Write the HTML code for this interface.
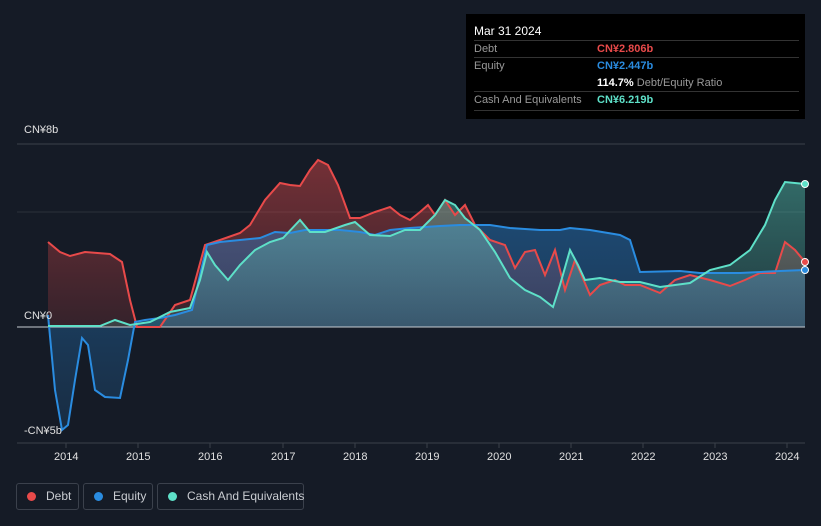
<!DOCTYPE html>
<html><head><meta charset="utf-8"><style>
html,body{margin:0;width:821px;height:526px;overflow:hidden}
body{background:#151b26;font-family:"Liberation Sans",sans-serif;position:relative}
.tt{position:absolute;left:466px;top:14px;width:339px;height:105px;background:#000;color:#fff;font-size:11px}
.tt .r{position:absolute;left:8px;right:6px;border-top:1px solid #333}
.lg{position:absolute;top:483px;height:27px;border:1px solid #3b414c;border-radius:3px;color:#c9ccd1;font-size:12px;line-height:25px;box-sizing:border-box;white-space:nowrap}
.lg i{display:inline-block;width:9px;height:9px;border-radius:50%;margin:0 10px 0 10px;vertical-align:-1px}
.ax{position:absolute;color:#e0e0e0;font-size:11px}
</style></head><body>
<svg width="821" height="526" style="position:absolute;left:0;top:0">
<defs>
<linearGradient id="gd" x1="0" y1="0" x2="0" y2="1"><stop offset="0" stop-color="#e84a4a" stop-opacity=".45"/><stop offset="1" stop-color="#e84a4a" stop-opacity=".15"/></linearGradient>
<linearGradient id="ge" x1="0" y1="0" x2="0" y2="1"><stop offset="0" stop-color="#2a8ce0" stop-opacity=".4"/><stop offset="1" stop-color="#2a8ce0" stop-opacity=".15"/></linearGradient>
<linearGradient id="gc" x1="0" y1="0" x2="0" y2="1"><stop offset="0" stop-color="#5ee0c8" stop-opacity=".4"/><stop offset="1" stop-color="#5ee0c8" stop-opacity=".15"/></linearGradient>
</defs>
<line x1="17" y1="144" x2="805" y2="144" stroke="#3a404a"/>
<line x1="17" y1="212" x2="805" y2="212" stroke="#2a303a"/>
<line x1="17" y1="443" x2="805" y2="443" stroke="#3a404a"/>
<g stroke="#3a404a"><line x1="66" y1="443" x2="66" y2="448"/><line x1="138" y1="443" x2="138" y2="448"/><line x1="210" y1="443" x2="210" y2="448"/><line x1="283" y1="443" x2="283" y2="448"/><line x1="355" y1="443" x2="355" y2="448"/><line x1="427" y1="443" x2="427" y2="448"/><line x1="499" y1="443" x2="499" y2="448"/><line x1="571" y1="443" x2="571" y2="448"/><line x1="643" y1="443" x2="643" y2="448"/><line x1="715" y1="443" x2="715" y2="448"/><line x1="787" y1="443" x2="787" y2="448"/></g>
<path fill="url(#gd)" d="M48,327 L48,242 L60,252 L70,256 L85,252 L110,254 L122,262 L130,300 L137,327 L160,327 L175,305 L190,300 L205,245 L220,240 L240,233 L250,225 L265,200 L280,183 L290,185 L300,186 L310,170 L318,160 L328,165 L338,185 L350,218 L360,218 L375,212 L390,207 L400,215 L410,220 L420,212 L428,205 L435,215 L445,200 L455,215 L465,205 L475,225 L490,240 L505,245 L515,268 L525,252 L535,250 L545,275 L555,250 L565,290 L575,260 L590,295 L600,285 L615,280 L625,285 L640,285 L660,293 L675,280 L690,275 L710,280 L730,286 L745,280 L760,273 L775,273 L785,242 L795,250 L805,262 L805,327Z"/>
<path fill="url(#ge)" d="M48,327 L48,315 L55,390 L62,430 L68,425 L75,380 L82,338 L88,345 L95,390 L105,397 L120,398 L128,360 L135,322 L145,320 L160,318 L175,315 L192,310 L200,275 L207,245 L220,242 L240,240 L260,238 L275,232 L290,233 L305,230 L320,230 L340,230 L360,232 L375,235 L390,230 L410,228 L440,226 L460,225 L490,225 L510,228 L540,230 L560,230 L570,228 L590,230 L620,235 L630,240 L640,272 L680,271 L700,273 L740,273 L780,271 L805,270 L805,327Z"/>
<path fill="url(#gc)" d="M48,327 L48,326 L100,326 L115,320 L130,325 L150,322 L170,312 L190,308 L200,280 L207,252 L215,265 L228,280 L240,265 L255,250 L270,242 L283,238 L300,220 L310,232 L325,232 L345,225 L355,222 L370,235 L390,236 L405,230 L420,230 L435,215 L445,200 L455,205 L465,218 L480,230 L495,252 L510,278 L525,290 L540,297 L553,307 L560,285 L570,250 L578,265 L585,280 L600,278 L620,282 L640,282 L660,287 L690,283 L710,270 L730,265 L750,250 L765,225 L775,200 L785,182 L805,184 L805,327Z"/>
<line x1="17" y1="327" x2="805" y2="327" stroke="#c8ccd2" stroke-width="1"/>
<path fill="none" stroke="#e84a4a" stroke-width="2" d="M48,242 L60,252 L70,256 L85,252 L110,254 L122,262 L130,300 L137,327 L160,327 L175,305 L190,300 L205,245 L220,240 L240,233 L250,225 L265,200 L280,183 L290,185 L300,186 L310,170 L318,160 L328,165 L338,185 L350,218 L360,218 L375,212 L390,207 L400,215 L410,220 L420,212 L428,205 L435,215 L445,200 L455,215 L465,205 L475,225 L490,240 L505,245 L515,268 L525,252 L535,250 L545,275 L555,250 L565,290 L575,260 L590,295 L600,285 L615,280 L625,285 L640,285 L660,293 L675,280 L690,275 L710,280 L730,286 L745,280 L760,273 L775,273 L785,242 L795,250 L805,262"/>
<path fill="none" stroke="#2a8ce0" stroke-width="2" d="M48,315 L55,390 L62,430 L68,425 L75,380 L82,338 L88,345 L95,390 L105,397 L120,398 L128,360 L135,322 L145,320 L160,318 L175,315 L192,310 L200,275 L207,245 L220,242 L240,240 L260,238 L275,232 L290,233 L305,230 L320,230 L340,230 L360,232 L375,235 L390,230 L410,228 L440,226 L460,225 L490,225 L510,228 L540,230 L560,230 L570,228 L590,230 L620,235 L630,240 L640,272 L680,271 L700,273 L740,273 L780,271 L805,270"/>
<path fill="none" stroke="#5ee0c8" stroke-width="2" d="M48,326 L100,326 L115,320 L130,325 L150,322 L170,312 L190,308 L200,280 L207,252 L215,265 L228,280 L240,265 L255,250 L270,242 L283,238 L300,220 L310,232 L325,232 L345,225 L355,222 L370,235 L390,236 L405,230 L420,230 L435,215 L445,200 L455,205 L465,218 L480,230 L495,252 L510,278 L525,290 L540,297 L553,307 L560,285 L570,250 L578,265 L585,280 L600,278 L620,282 L640,282 L660,287 L690,283 L710,270 L730,265 L750,250 L765,225 L775,200 L785,182 L805,184"/>
<circle cx="805" cy="262" r="3.5" fill="#e84a4a" stroke="#fff" stroke-width="1"/>
<circle cx="805" cy="270" r="3.5" fill="#2a8ce0" stroke="#fff" stroke-width="1"/>
<circle cx="805" cy="184" r="3.5" fill="#5ee0c8" stroke="#fff" stroke-width="1"/>
</svg>
<div class="ax" style="left:24px;top:124px">CN¥8b</div>
<div class="ax" style="left:24px;top:310px">CN¥0</div>
<div class="ax" style="left:24px;top:425px">-CN¥5b</div>
<div class="ax" style="left:54px;top:451px">2014</div><div class="ax" style="left:126px;top:451px">2015</div><div class="ax" style="left:198px;top:451px">2016</div><div class="ax" style="left:271px;top:451px">2017</div><div class="ax" style="left:343px;top:451px">2018</div><div class="ax" style="left:415px;top:451px">2019</div><div class="ax" style="left:487px;top:451px">2020</div><div class="ax" style="left:559px;top:451px">2021</div><div class="ax" style="left:631px;top:451px">2022</div><div class="ax" style="left:703px;top:451px">2023</div><div class="ax" style="left:775px;top:451px">2024</div>
<div class="tt">
<div style="position:absolute;left:8px;top:10px;font-size:12px">Mar 31 2024</div>
<div class="r" style="top:26px"></div>
<div style="position:absolute;left:8px;top:29px;color:#999">Debt</div><div style="position:absolute;left:131px;top:29px;color:#e84a4a;font-weight:bold">CN¥2.806b</div>
<div class="r" style="top:43px"></div>
<div style="position:absolute;left:8px;top:46px;color:#999">Equity</div><div style="position:absolute;left:131px;top:46px;color:#2a8ce0;font-weight:bold">CN¥2.447b</div>
<div style="position:absolute;left:131px;top:63px"><b>114.7%</b> <span style="color:#999">Debt/Equity Ratio</span></div>
<div class="r" style="top:77px"></div>
<div style="position:absolute;left:8px;top:80px;color:#999">Cash And Equivalents</div><div style="position:absolute;left:131px;top:80px;color:#5ee0c8;font-weight:bold">CN¥6.219b</div>
<div class="r" style="top:96px"></div>
</div>
<div class="lg" style="left:16px;width:63px"><i style="background:#e84a4a"></i>Debt</div>
<div class="lg" style="left:83px;width:70px"><i style="background:#2a8ce0"></i>Equity</div>
<div class="lg" style="left:157px;width:147px"><i style="background:#5ee0c8"></i>Cash And Equivalents</div>
</body></html>
